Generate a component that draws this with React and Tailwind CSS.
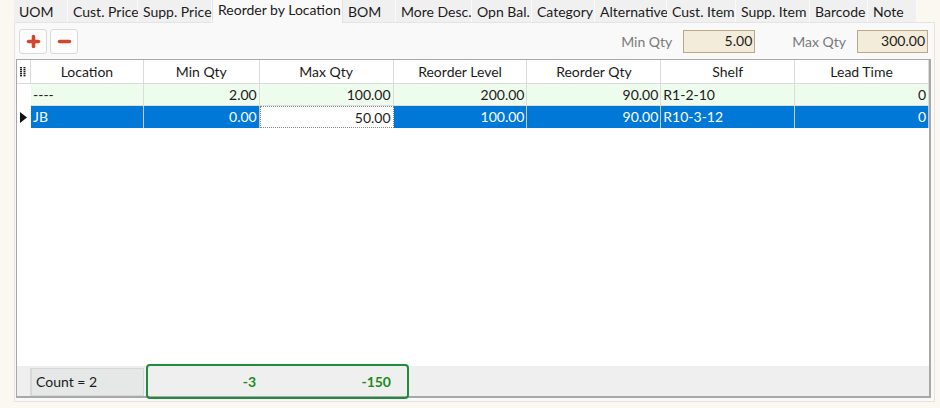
import { Plus, Minus } from 'lucide-react'

const tabs = [
  { label: 'UOM', w: 54 },
  { label: 'Cust. Price', w: 70 },
  { label: 'Supp. Price', w: 74 },
  { label: 'Reorder by Location', w: 131, active: true },
  { label: 'BOM', w: 53 },
  { label: 'More Desc.', w: 76 },
  { label: 'Opn Bal.', w: 60 },
  { label: 'Category', w: 63 },
  { label: 'Alternative', w: 72 },
  { label: 'Cust. Item', w: 69 },
  { label: 'Supp. Item', w: 74 },
  { label: 'Barcode', w: 58 },
  { label: 'Note', w: 49 },
]

const cols = [
  { label: 'Location', w: 'w-[113px]' },
  { label: 'Min Qty', w: 'w-[116px]' },
  { label: 'Max Qty', w: 'w-[134px]' },
  { label: 'Reorder Level', w: 'w-[134px]' },
  { label: 'Reorder Qty', w: 'w-[134px]' },
  { label: 'Shelf', w: 'w-[134px]' },
  { label: 'Lead Time', w: 'w-[134px]' },
]

const rows = [
  ['----', '2.00', '100.00', '200.00', '90.00', 'R1-2-10', '0'],
  ['JB', '0.00', '50.00', '100.00', '90.00', 'R10-3-12', '0'],
]

const leftAligned = [0, 5]

function HeaderGlyph() {
  return (
    <svg width="6" height="10" viewBox="0 0 6 10">
      {[0, 2, 4, 6, 8].map((y) => (
        <g key={y}>
          <rect x="0" y={y} width="2" height="1.4" fill="#222" />
          <rect x="3.5" y={y} width="2" height="1.4" fill="#222" />
        </g>
      ))}
    </svg>
  )
}

export default function App() {
  return (
    <div
      className="w-[940px] h-[408px] bg-[#fbf8f1] pl-[14px] pr-[5px] flex flex-col text-[14px] text-[#1b1b1b] overflow-hidden"
      style={{ fontFamily: 'Lato, "Noto Sans", sans-serif' }}
    >
      {/* tab strip */}
      <div className="flex h-[22px] shrink-0">
        {tabs.map((t) => (
          <div
            key={t.label}
            style={{ width: t.w }}
            className={
              t.active
                ? 'h-[23px] -mb-px bg-[#f9f9f9] border-x border-[#e2e2e2] px-[5px] leading-[20px] whitespace-nowrap relative z-10'
                : 'h-[22px] bg-[#f0f0f0] border-r border-[#fafafa] px-[5px] leading-[24px] whitespace-nowrap'
            }
          >
            {t.label}
          </div>
        ))}
      </div>

      {/* panel */}
      <div className="h-[380px] bg-[#f9f9f9] border border-[#e4e4e4] flex flex-col px-px">
        <div className="flex items-start h-[36px] pt-[6px] pl-[3px] pr-[5px]">
          <button className="w-[28px] h-[25px] bg-[#fcfcfc] border border-[#d9d9d9] rounded-[3px] flex items-center justify-center">
            <Plus size={17} strokeWidth={5} className="text-[#d4432c]" />
          </button>
          <button className="ml-[3px] w-[28px] h-[25px] bg-[#fcfcfc] border border-[#d9d9d9] rounded-[3px] flex items-center justify-center">
            <Minus size={17} strokeWidth={5} className="text-[#d4432c]" />
          </button>
          <div className="ml-auto flex items-center gap-[11px] mt-[1px]">
            <span className="text-[#7a7a7a]">Min Qty</span>
            <div className="w-[72px] h-[23px] bg-[#f4ecda] border border-[#b8a888] text-right pr-[2px] leading-[20px]">5.00</div>
            <span className="ml-[26px] text-[#7a7a7a]">Max Qty</span>
            <div className="w-[71px] h-[23px] bg-[#f4ecda] border border-[#b8a888] text-right pr-[2px] leading-[20px]">300.00</div>
          </div>
        </div>

        {/* grid */}
        <div className="relative w-[915px] h-[339px] border border-[#a8a8a8] border-r-2 border-b-2 bg-white flex flex-col">
          <div className="flex h-[24px] bg-white border-b border-[#dadada]">
            <div className="w-[14px] flex items-center justify-center border-r border-[#dadada]">
              <HeaderGlyph />
            </div>
            {cols.map((c) => (
              <div key={c.label} className={`${c.w} border-r border-[#dadada] text-center leading-[24px]`}>
                {c.label}
              </div>
            ))}
          </div>

          {rows.map((r, ri) => {
            const sel = ri === 1
            return (
              <div key={ri} className={`flex h-[22px] ${sel ? '' : 'bg-[#eefcee]'}`}>
                <div className="w-[14px] bg-white flex items-center justify-center">
                  {sel && (
                    <svg width="7" height="11" viewBox="0 0 7 11">
                      <path d="M0 0 L7 5.5 L0 11 Z" fill="#111" />
                    </svg>
                  )}
                </div>
                {r.map((v, ci) => {
                  const focus = sel && ci === 2
                  const cls = focus
                    ? 'bg-white text-[#1b1b1b] border border-dotted border-[#888]'
                    : sel
                      ? 'bg-[#0078d7] text-white border-r border-[#c9c9c9]'
                      : 'border-r border-b border-[#dcdcdc]'
                  return (
                    <div
                      key={ci}
                      className={`${cols[ci].w} ${cls} leading-[21px] px-[2px] whitespace-nowrap ${leftAligned.includes(ci) ? 'text-left' : 'text-right'}`}
                    >
                      {v}
                    </div>
                  )
                })}
              </div>
            )
          })}

          <div className="flex-1" />

          {/* footer */}
          <div className="flex h-[30px] bg-[#efefef] pt-[2px]">
            <div className="w-[14px] border-r border-[#dadada]" />
            <div className="w-[113px] bg-[#e6e8e8] border border-[#d6d6d6] pl-[4px] leading-[25px]">Count = 2</div>
            <div className="w-[116px] text-right pr-[4px] leading-[27px] font-bold text-[#1c8a23]">-3</div>
            <div className="w-[134px] text-right pr-[3px] leading-[27px] font-bold text-[#1c8a23]">-150</div>
          </div>

          <div className="absolute left-[129px] bottom-[-3px] w-[263px] h-[35px] border-2 border-[#1f8b3d] rounded-[4px]" />
        </div>
      </div>
    </div>
  )
}
